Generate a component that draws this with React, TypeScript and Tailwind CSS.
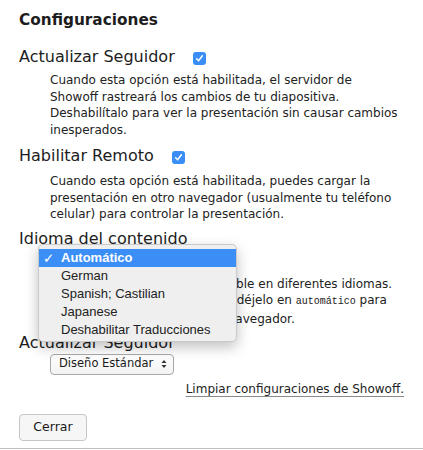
import React from "react";

function Check() {
  return (
    <span className="ml-[18px] mt-[2px] flex h-[13px] w-[13px] items-center justify-center rounded-[3px] bg-[#3b8ef5]">
      <svg width="9" height="9" viewBox="0 0 9 9">
        <path d="M1.6 4.8 L3.6 6.8 L7.4 1.8" fill="none" stroke="#fff" strokeWidth="1.5" strokeLinecap="round" strokeLinejoin="round" />
      </svg>
    </span>
  );
}

export default function App() {
  const sans = { fontFamily: '"DejaVu Sans", "Noto Sans", sans-serif' };
  return (
    <div className="relative h-[450px] w-[423px] overflow-hidden bg-white text-[#222]" style={sans}>
      <div className="flex h-[448px] flex-col px-[19px] pt-[10px]">
        <h2 className="text-[15.3px] font-bold leading-[20px] text-[#1d1d1d]">Configuraciones</h2>

        <div className="mt-[16px] flex items-center">
          <span className="text-[16px] leading-[22px] text-[#1d1d1d]">Actualizar Seguidor</span>
          <Check />
        </div>
        <p className="mt-[4px] pl-[31px] text-[12px] leading-[16.5px]">
          Cuando esta opción está habilitada, el servidor de<br />
          Showoff rastreará los cambios de tu diapositiva.<br />
          Deshabilítalo para ver la presentación sin causar cambios<br />
          inesperados.
        </p>

        <div className="mt-[7px] flex items-center">
          <span className="text-[16px] leading-[22px] text-[#1d1d1d]">Habilitar Remoto</span>
          <Check />
        </div>
        <p className="mt-[6px] pl-[31px] text-[12px] leading-[16.5px]">
          Cuando esta opción está habilitada, puedes cargar la<br />
          presentación en otro navegador (usualmente tu teléfono<br />
          celular) para controlar la presentación.
        </p>

        <div className="mt-[5px] text-[16px] leading-[22px] text-[#1d1d1d]">Idioma del contenido</div>
        <div className="h-[21px] pl-[31px]" />
        <p className="mt-[5px] pl-[31px] text-[12px] leading-[16.5px]">
          <span className="[word-spacing:0.7px]">Esta presentación está disponi</span>ble en diferentes idiomas.<br />
          Si no está seguro de qué usar, déjelo en{" "}
          <code className="text-[10px]" style={{ fontFamily: '"Liberation Mono", monospace' }}>automático</code> para<br />
          usar el idioma definido en su navegador.
        </p>

        <div className="mt-[4.5px] text-[16px] leading-[22px] text-[#1d1d1d]">Actualizar Seguidor</div>
        <div className="pl-[31px]">
          <div className="flex h-[21px] w-[124px] items-center justify-between rounded-[4px] border border-[#a9a9a9] bg-gradient-to-b from-white to-[#f2f2f2] pl-[8px] pr-[6px] text-[11.5px] text-[#1a1a1a]">
            <span>Diseño Estándar</span>
            <svg width="6" height="10" viewBox="0 0 6 10">
              <path d="M3 1 L5.5 4 L0.5 4 Z" fill="#333" />
              <path d="M3 9 L5.5 6 L0.5 6 Z" fill="#333" />
            </svg>
          </div>
        </div>

        <div className="mt-[6px] flex justify-end">
          <span className="text-[12px] leading-[16px] underline decoration-[#8a8a8a] underline-offset-[3px]">
            Limpiar configuraciones de Showoff.
          </span>
        </div>

        <div className="mt-[17px]">
          <button className="flex h-[27px] w-[68px] items-center justify-center rounded-[4px] border border-[#c6c6c6] bg-[#f6f6f6] text-[12.5px] text-[#1a1a1a]">
            Cerrar
          </button>
        </div>
      </div>
      <div className="h-[1px] w-full bg-[#bdbdbd]" />

      <div
        className="absolute left-[38px] top-[244px] h-[98px] w-[199px] rounded-[5px] border border-[#c9c9c9] bg-[#efefef] pt-[4px] shadow-[0_5px_14px_rgba(0,0,0,0.25)]"
        style={{ fontFamily: '"Liberation Sans", Arial, sans-serif' }}
      >
        <div className="flex h-[18px] items-center bg-[#3b8ef6] text-[13px] font-bold text-white">
          <span className="w-[22px] pl-[4px] text-[13.5px]" style={sans}>✓</span>
          <span>Automático</span>
        </div>
        <div className="flex h-[18px] items-center pl-[22px] text-[13px] text-[#222]">German</div>
        <div className="flex h-[18px] items-center pl-[22px] text-[13px] text-[#222]">Spanish; Castilian</div>
        <div className="flex h-[18px] items-center pl-[22px] text-[13px] text-[#222]">Japanese</div>
        <div className="flex h-[18px] items-center pl-[22px] text-[13px] text-[#222]">Deshabilitar Traducciones</div>
      </div>
    </div>
  );
}
